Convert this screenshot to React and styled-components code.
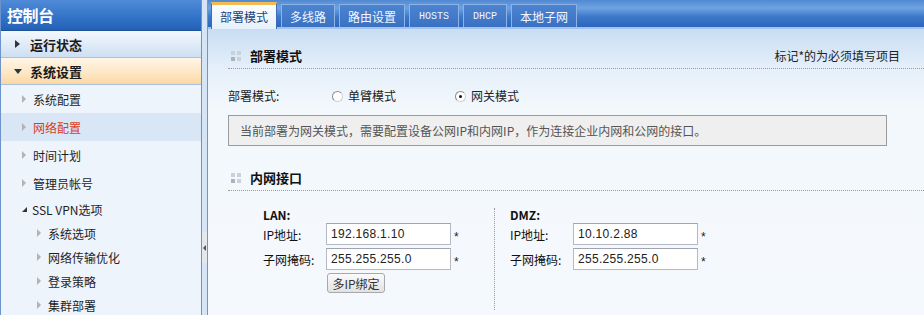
import React from 'react';
import styled, { createGlobalStyle, css } from 'styled-components';

const GlobalStyle = createGlobalStyle`
  html, body { margin: 0; padding: 0; }
  body {
    font-family: "Noto Sans CJK SC", "Noto Sans", sans-serif;
    font-size: 12px;
    color: #222;
    background: #f4f8fc;
  }
  * { box-sizing: border-box; }
`;

const Page = styled.div`
  display: flex;
  width: 924px;
  height: 315px;
  overflow: hidden;
`;

// Sidebar
const Sidebar = styled.aside`
  width: 202px;
  flex: none;
  background: #eef4fb;
  border-left: 1px solid #6c93cb;
  border-right: 1px solid #6c93cb;
`;

const SideHeader = styled.div`
  height: 31px;
  line-height: 30px;
  padding-left: 6px;
  color: #fff;
  font-size: 16px;
  font-weight: bold;
  letter-spacing: -0.5px;
  background: linear-gradient(#4f8bd7, #3474c8 55%, #2461b6);
  border-bottom: 1px solid #1f5199;
`;

const GroupRow = styled.div`
  display: flex;
  align-items: center;
  height: 27px;
  padding-left: 13px;
  gap: 8px;
  font-size: 13px;
  font-weight: bold;
  color: #1b1b1b;
  border-bottom: 1px solid #a9c2e2;
  background: ${p => p.$open
    ? 'linear-gradient(#fff5e6, #fde6c3 60%, #fbd7a1)'
    : 'linear-gradient(#f3f8fe, #dde9f7 60%, #cddff3)'};
`;

const GroupArrow = styled.span`
  width: 0;
  height: 0;
  ${p => p.$open
    ? css`
      border-top: 5px solid #2b3645;
      border-left: 4px solid transparent;
      border-right: 4px solid transparent;
    `
    : css`
      border-left: 5px solid #2b3645;
      border-top: 4px solid transparent;
      border-bottom: 4px solid transparent;
      margin-left: 1px;
      margin-right: 2px;
    `}
`;

const NavItem = styled.div`
  display: flex;
  align-items: center;
  height: ${p => (p.$small ? 24 : 28)}px;
  padding-left: ${p => (p.$small ? 36 : 21)}px;
  gap: 7px;
  font-size: 12px;
  color: ${p => (p.$active ? '#d8401c' : '#1e1e1e')};
  background: ${p => (p.$active ? '#d8e6f6' : 'transparent')};
`;

const Chevron = styled.span`
  width: 0;
  height: 0;
  border-left: 4px solid #b3b3b3;
  border-top: 4px solid transparent;
  border-bottom: 4px solid transparent;
`;

const SubGroup = styled.div`
  display: flex;
  align-items: center;
  height: 24px;
  padding-left: 21px;
  gap: 5px;
  font-size: 12px;
  color: #1e1e1e;
`;

const Corner = styled.span`
  width: 0;
  height: 0;
  border-bottom: 5px solid #333;
  border-left: 5px solid transparent;
`;

// Splitter
const Splitter = styled.div`
  width: 5px;
  flex: none;
  background: #d6e5f6;
  padding-top: 232px;
`;

const Handle = styled.div`
  height: 31px;
  background: #e4e7eb;
  display: flex;
  align-items: center;
  justify-content: center;

  &::before {
    content: '';
    border-right: 3px solid #555;
    border-top: 3px solid transparent;
    border-bottom: 3px solid transparent;
  }
`;

// Main
const Main = styled.main`
  flex: 1;
  display: flex;
  flex-direction: column;
  border-left: 1px solid #6d96cf;
  background: linear-gradient(#c8ddf3 29px, #e6f0fa 70px, #f3f8fc 110px, #f5f9fd);
`;

const TabBar = styled.div`
  height: 29px;
  display: flex;
  align-items: flex-end;
  gap: 4px;
  padding-left: 3px;
  background: linear-gradient(#5189d2, #6ea3e2 30%, #3c78c9 62%, #2d66bd);
  border-bottom: 2px solid #a4c3ea;
`;

const Tab = styled.div`
  height: ${p => (p.$active ? 27 : 23)}px;
  margin-bottom: ${p => (p.$active ? -2 : 0)}px;
  padding: 0 ${p => (p.$mono ? 9 : 8)}px;
  display: flex;
  align-items: center;
  font-size: ${p => (p.$mono ? 10 : 12)}px;
  font-family: ${p => (p.$mono ? '"Liberation Mono", monospace' : 'inherit')};
  ${p => p.$active
    ? css`
      color: #1c3f7a;
      background: linear-gradient(#fbfdff, #e6f0fa);
      border: 1px solid #3b6db5;
      border-top: 3px solid #f2bb52;
      border-bottom: none;
      padding-bottom: 2px;
    `
    : css`
      color: #f2f6ff;
      background: linear-gradient(#4c84d0, #3a71c3);
      border: 1px solid #8bb3e6;
      border-bottom: none;
    `}
`;

const Body = styled.div`
  padding-left: 20px;
`;

const SectionHead = styled.div`
  display: flex;
  align-items: center;
  justify-content: space-between;
  padding: ${p => p.$top}px 24px 3px 3px;
  line-height: 18px;
  border-bottom: 1px dotted #9a9a9a;
`;

const SectionTitle = styled.div`
  display: flex;
  align-items: center;
  gap: 9px;
  font-size: 13px;
  font-weight: bold;
  color: #111;
`;

const Dots = styled.span`
  display: grid;
  grid-template-columns: 4px 4px;
  gap: 2px;

  i {
    width: 4px;
    height: 4px;
    background: #c9d1da;
  }
  i:nth-child(3) { background: #aab3be; }
`;

const Hint = styled.div`
  font-size: 12px;
  color: #222;
`;

const FormRow = styled.div`
  display: flex;
  align-items: center;
  margin-top: 18px;
  line-height: 18px;
`;

const FormLabel = styled.div`
  width: 104px;
`;

const RadioOption = styled.label`
  display: flex;
  align-items: center;
  gap: 5px;
  min-width: 123px;
`;

const Radio = styled.span`
  width: 11px;
  height: 11px;
  border-radius: 50%;
  border: 1px solid #8c8c8c;
  border-right-color: #d0d0d0;
  border-bottom-color: #d0d0d0;
  background: #fff;
  display: flex;
  align-items: center;
  justify-content: center;

  &::after {
    content: '';
    width: 3px;
    height: 3px;
    border-radius: 50%;
    background: ${p => (p.$checked ? '#111' : 'transparent')};
  }
`;

const InfoBox = styled.div`
  margin: 10px 37px 0 0;
  height: 31px;
  padding-left: 11px;
  display: flex;
  align-items: center;
  background: #efefef;
  border: 1px solid #9b9b9b;
  color: #555;
`;

const Interfaces = styled.div`
  display: flex;
  padding: 17px 0 0 35px;
`;

const IfaceColumn = styled.div`
  width: ${p => (p.$first ? 231 : 260)}px;
  min-height: 102px;
  ${p => !p.$first && css`
    border-left: 1px dotted #9a9a9a;
    padding-left: 15px;
  `}
`;

const IfaceTitle = styled.div`
  font-weight: bold;
  line-height: 14px;
  color: #111;
`;

const FieldRow = styled.div`
  display: flex;
  align-items: center;
  margin-top: ${p => (p.$first ? 1 : 3)}px;
`;

const FieldLabel = styled.div`
  width: 63px;
  color: #111;
`;

const Input = styled.input`
  width: 125px;
  height: 22px;
  padding: 0 4px;
  border: 1px solid #b4b9c4;
  border-top-color: #9ea4b0;
  background: #fff;
  font-family: "Liberation Sans", Arial, sans-serif;
  font-size: 12px;
  letter-spacing: 0.3px;
  color: #222;
  outline: none;
`;

const Star = styled.span`
  margin-left: 3px;
  padding-top: 5px;
  font-family: "Liberation Sans", Arial, sans-serif;
  font-size: 12px;
`;

const BindButton = styled.button`
  margin: 3px 0 0 64px;
  height: 20px;
  width: 58px;
  padding: 0;
  font-family: inherit;
  font-size: 12px;
  color: #333;
  background: linear-gradient(#fbfbfb, #e2e2e2);
  border: 1px solid #a8a8a8;
  border-radius: 3px;
`;

const Field = ({ label, value, first }) => (
  <FieldRow $first={first}>
    <FieldLabel>{label}</FieldLabel>
    <Input value={value} readOnly />
    <Star>*</Star>
  </FieldRow>
);

const tabs = [
  { label: '部署模式', active: true },
  { label: '多线路' },
  { label: '路由设置' },
  { label: 'HOSTS', mono: true },
  { label: 'DHCP', mono: true },
  { label: '本地子网' },
];

const settings = ['系统配置', '网络配置', '时间计划', '管理员帐号'];
const vpnItems = ['系统选项', '网络传输优化', '登录策略', '集群部署'];

const Section = ({ title, top, children }) => (
  <SectionHead $top={top}>
    <SectionTitle>
      <Dots><i /><i /><i /><i /></Dots>
      {title}
    </SectionTitle>
    {children}
  </SectionHead>
);

export default function App() {
  return (
    <>
      <GlobalStyle />
      <Page>
        <Sidebar>
          <SideHeader>控制台</SideHeader>
          <GroupRow>
            <GroupArrow />
            运行状态
          </GroupRow>
          <GroupRow $open>
            <GroupArrow $open />
            系统设置
          </GroupRow>
          {settings.map(s => (
            <NavItem key={s} $active={s === '网络配置'}>
              <Chevron />
              {s}
            </NavItem>
          ))}
          <SubGroup>
            <Corner />
            SSL VPN选项
          </SubGroup>
          {vpnItems.map(s => (
            <NavItem key={s} $small>
              <Chevron />
              {s}
            </NavItem>
          ))}
        </Sidebar>

        <Splitter>
          <Handle />
        </Splitter>

        <Main>
          <TabBar>
            {tabs.map(t => (
              <Tab key={t.label} $active={t.active} $mono={t.mono}>{t.label}</Tab>
            ))}
          </TabBar>
          <Body>
            <Section title="部署模式" top={18}>
              <Hint>标记*的为必须填写项目</Hint>
            </Section>

            <FormRow>
              <FormLabel>部署模式:</FormLabel>
              <RadioOption><Radio />单臂模式</RadioOption>
              <RadioOption><Radio $checked />网关模式</RadioOption>
            </FormRow>

            <InfoBox>当前部署为网关模式，需要配置设备公网IP和内网IP，作为连接企业内网和公网的接口。</InfoBox>

            <Section title="内网接口" top={23} />

            <Interfaces>
              <IfaceColumn $first>
                <IfaceTitle>LAN:</IfaceTitle>
                <Field first label="IP地址:" value="192.168.1.10" />
                <Field label="子网掩码:" value="255.255.255.0" />
                <BindButton>多IP绑定</BindButton>
              </IfaceColumn>
              <IfaceColumn>
                <IfaceTitle>DMZ:</IfaceTitle>
                <Field first label="IP地址:" value="10.10.2.88" />
                <Field label="子网掩码:" value="255.255.255.0" />
              </IfaceColumn>
            </Interfaces>
          </Body>
        </Main>
      </Page>
    </>
  );
}
